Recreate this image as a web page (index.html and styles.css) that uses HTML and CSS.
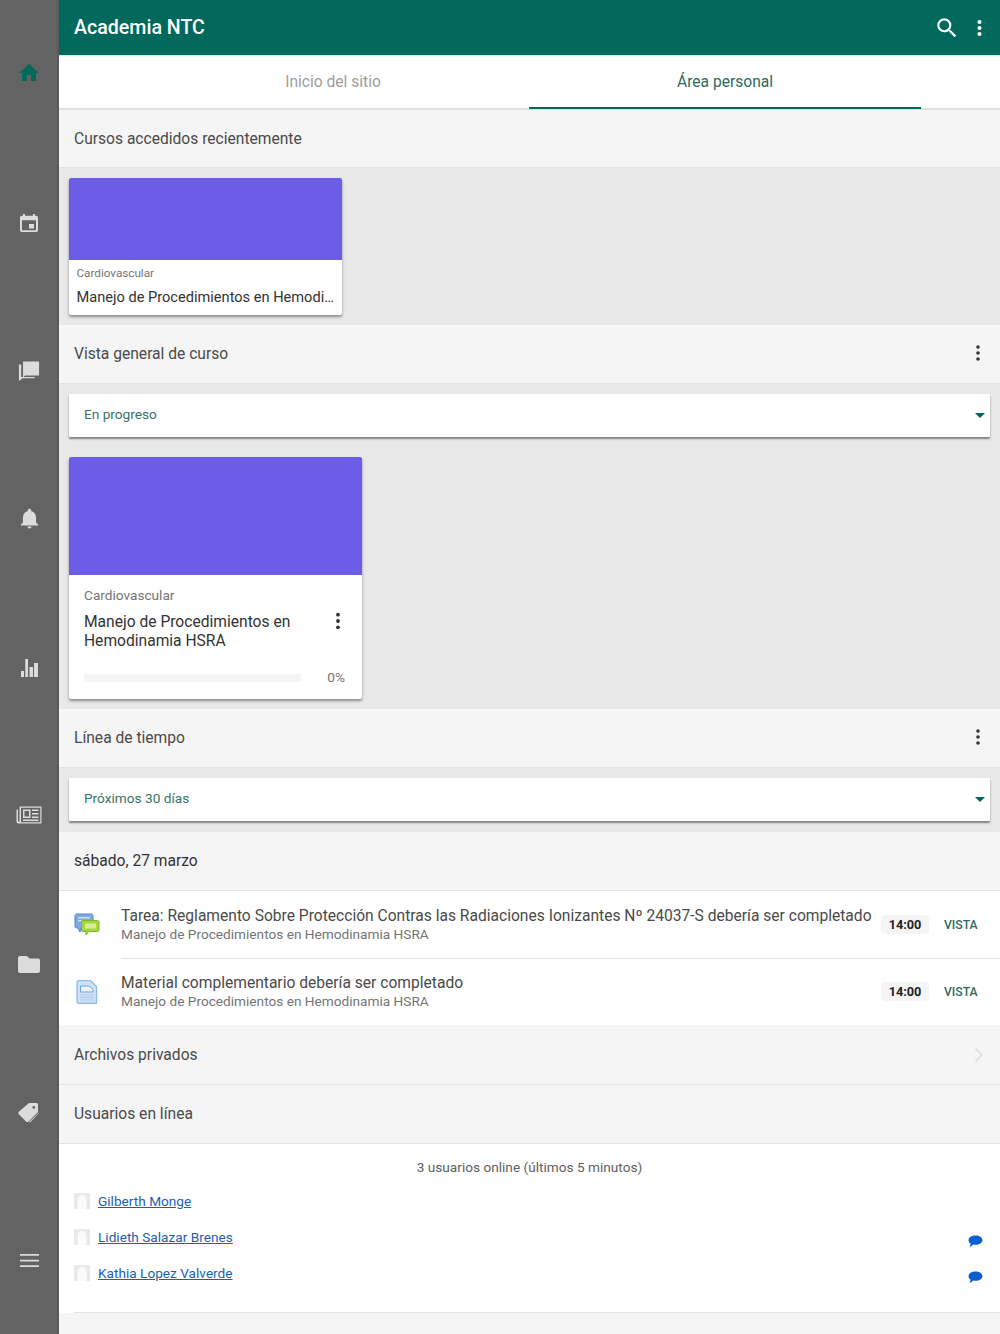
FILE: index.html
```html
<!DOCTYPE html>
<html lang="es">
<head>
<meta charset="utf-8">
<title>Academia NTC</title>
<link rel="stylesheet" href="styles.css">
</head>
<body>
<div class="app">
  <nav class="rail">
    <div class="rail-item"><svg class="rail-icon home" viewBox="0 0 24 24"><path d="M10 20v-6h4v6h5v-8h3L12 3 2 12h3v8z"/></svg></div>
    <div class="rail-item"><svg class="rail-icon cal" viewBox="3 1 18 20" preserveAspectRatio="none"><path d="M17 12h-5v5h5v-5zM16 1v2H8V1H6v2H5c-1.100 0-2 .9-2 2v14c0 1.100.9 2 2 2h14c1.100 0 2-.9 2-2V5c0-1.100-.9-2-2-2h-1V1h-2zm3 18H5V8h14v11z"/></svg></div>
    <div class="rail-item"><svg class="rail-icon chat" viewBox="0 0 24 24"><path d="M5.500 1.500h17.500v15.500H7.800L5.500 19z"/><path d="M3.500 5v13.500h14.500v1.500H5l-4 3V5z"/></svg></div>
    <div class="rail-item"><svg class="rail-icon bell" viewBox="0 0 24 24"><path d="M12 23.500c1.300 0 2.300-1 2.300-2.300H9.700c0 1.300 1 2.300 2.300 2.300zm7.500-7V11c0-3.700-2-6.800-5.500-7.700V2.800C14 1.700 13.100.8 12 .8s-2 .9-2 2v.5C6.500 4.200 4.500 7.300 4.500 11v5.500L2 19v1h20v-1z"/></svg></div>
    <div class="rail-item"><svg class="rail-icon chart" viewBox="0 0 17 18"><path d="M0 12h3v6H0zM4.300 0H7v18H4.300zM8.500 8H12v10H8.500zM13 4h4v14h-4z"/></svg></div>
    <div class="rail-item"><svg class="rail-icon wide" viewBox="0 0 26 18"><path d="M4 .5h21.500v17H2.500A2 2 0 0 1 .5 15.500V3.500H2v12h1.500V1zM5 1.700V16.300h19.300V1.700z" fill-rule="evenodd"/><path d="M7 3.500h7.500v8.500H7zM8.500 5v5.500H13V5zM16 3.500h6.500V5H16zM16 7h6.500v1.500H16zM16 10.500h6.500V12H16zM7 13.500h15.500V15H7z" fill-rule="evenodd"/></svg></div>
    <div class="rail-item"><svg class="rail-icon folder" viewBox="0 0 22 17"><path d="M9 0H2C.9 0 0 .9 0 2v13c0 1.100.9 2 2 2h18c1.100 0 2-.9 2-2V4.500c0-1.100-.9-2-2-2h-8.500z"/></svg></div>
    <div class="rail-item"><svg class="rail-icon tag" viewBox="0 0 22 20"><path d="M11 0h7.500c.8 0 1.500.7 1.500 1.500V9L10.500 18.500c-.7.7-1.800.7-2.500 0L.8 11.300c-.7-.7-.7-1.800 0-2.500zM15.800 5.800a1.400 1.400 0 1 0 0-2.800 1.400 1.400 0 0 0 0 2.800z" fill-rule="evenodd"/><path d="M21 4v6L12 19.500l-1-.5 10-9.500z"/></svg></div>
    <div class="rail-item"><svg class="rail-icon menu" viewBox="0 0 19 13"><path d="M0 0h19v1.700H0zM0 5.700h19v1.700H0zM0 11.300h19V13H0z"/></svg></div>
  </nav>

  <div class="main">
    <header class="topbar">
      <div class="brand">Academia NTC</div>
      <svg class="top-search" viewBox="0 0 24 24"><path d="M15.500 14h-.79l-.28-.27A6.471 6.471 0 0 0 16 9.500 6.500 6.500 0 1 0 9.500 16c1.610 0 3.090-.59 4.230-1.570l.27.28v.79l5 4.990L20.490 19l-4.990-5zm-6 0C7.010 14 5 11.990 5 9.500S7.010 5 9.500 5 14 7.010 14 9.500 11.990 14 9.500 14z"/></svg>
      <svg class="top-more" viewBox="0 0 6 20"><circle cx="3" cy="4" r="2"/><circle cx="3" cy="10" r="2"/><circle cx="3" cy="16" r="2"/></svg>
    </header>

    <div class="tabs">
      <div class="tab">Inicio del sitio</div>
      <div class="tab tab-active">Área personal</div>
    </div>

    <section class="head first">Cursos accedidos recientemente</section>
    <div class="grey recent">
      <article class="card card-small">
        <div class="cover cover-small"></div>
        <div class="small-body">
          <div class="cat-small">Cardiovascular</div>
          <div class="title-small">Manejo de Procedimientos en Hemodinamia HSRA</div>
        </div>
      </article>
    </div>

    <section class="head head-menu">Vista general de curso
      <svg class="dots" viewBox="0 0 6 20"><circle cx="3" cy="4" r="1.800"/><circle cx="3" cy="10" r="1.800"/><circle cx="3" cy="16" r="1.800"/></svg>
    </section>
    <div class="grey overview">
      <div class="select">En progreso<span class="caret"></span></div>
      <article class="card card-large">
        <div class="cover cover-large"></div>
        <div class="large-body">
          <div class="cat-large">Cardiovascular</div>
          <div class="title-row">
            <div class="title-large">Manejo de Procedimientos en Hemodinamia HSRA</div>
            <svg class="dots dark" viewBox="0 0 6 20"><circle cx="3" cy="3" r="2.100"/><circle cx="3" cy="10" r="2.100"/><circle cx="3" cy="17" r="2.100"/></svg>
          </div>
          <div class="progress-row"><div class="progress"></div><div class="pct">0%</div></div>
        </div>
      </article>
    </div>

    <section class="head head-menu">Línea de tiempo
      <svg class="dots" viewBox="0 0 6 20"><circle cx="3" cy="4" r="1.800"/><circle cx="3" cy="10" r="1.800"/><circle cx="3" cy="16" r="1.800"/></svg>
    </section>
    <div class="grey timeline-filter">
      <div class="select">Próximos 30 días<span class="caret"></span></div>
    </div>

    <section class="head date">sábado, 27 marzo</section>
    <div class="events">
      <div class="event">
        <svg class="event-icon" viewBox="0 0 26 24">
          <path d="M2.500 1h15a1.500 1.500 0 0 1 1.500 1.500v11a1.500 1.500 0 0 1-1.500 1.500H7l-1 4-2-4H2.500A1.500 1.500 0 0 1 1 13.500v-11A1.500 1.500 0 0 1 2.500 1z" fill="#7fa9e0" stroke="#4f86d6"/>
          <path d="M4 4h12v1.500H4zM4 7h8v1.500H4z" fill="#cfe0f5"/>
          <path d="M9 7.500h14.500a1.500 1.500 0 0 1 1.500 1.500v8a1.500 1.500 0 0 1-1.500 1.500H15l-3 3.500v-3.500H9A1.500 1.500 0 0 1 7.500 17V9A1.500 1.500 0 0 1 9 7.500z" fill="#a6d53e" stroke="#7fb52a"/>
          <path d="M11 10.500h11v5H11z" fill="#d8ec9a"/>
        </svg>
        <div class="event-text">
          <div class="event-title">Tarea: Reglamento Sobre Protección Contras las Radiaciones Ionizantes Nº 24037-S debería ser completado</div>
          <div class="event-course">Manejo de Procedimientos en Hemodinamia HSRA</div>
        </div>
        <span class="time">14:00</span><span class="view">VISTA</span>
      </div>
      <div class="event">
        <svg class="event-icon" viewBox="0 0 26 24">
          <path d="M4.500 .7h12L22.500 6.500V23.300H4.500A1.500 1.500 0 0 1 3 21.800V2.200A1.500 1.500 0 0 1 4.500 .7z" fill="#cfe3f8" stroke="#8fbbe8" stroke-width="1.300"/>
          <path d="M6.500 6h8.500l4 3.500V12H6.500z" fill="#eaf3fc" stroke="#6ea4dc"/>
          <path d="M6 14.500h14v1.100H6zM6 17h14v1.100H6zM6 19.500h14v1.100H6z" fill="#a9cdf0"/>
        </svg>
        <div class="event-text">
          <div class="event-title">Material complementario debería ser completado</div>
          <div class="event-course">Manejo de Procedimientos en Hemodinamia HSRA</div>
        </div>
        <span class="time">14:00</span><span class="view">VISTA</span>
      </div>
    </div>

    <section class="head head-menu files">Archivos privados
      <svg class="chevron" viewBox="0 0 10 16"><path d="M1.500 1.500 8 8l-6.500 6.500" fill="none" stroke="#dcdcdc" stroke-width="1.500"/></svg>
    </section>
    <section class="head">Usuarios en línea</section>

    <div class="online">
      <div class="online-count">3 usuarios online (últimos 5 minutos)</div>
      <div class="user"><svg class="avatar" viewBox="0 0 16 16"><rect width="16" height="16" fill="#e9e9e9"/><path d="M3.500 16V10C3 5 5 2 8 2s5 3 4.500 8v6z" fill="#fbfbfb"/></svg><a class="user-name" href="#">Gilberth Monge</a></div>
      <div class="user"><svg class="avatar" viewBox="0 0 16 16"><rect width="16" height="16" fill="#e9e9e9"/><path d="M3.500 16V10C3 5 5 2 8 2s5 3 4.500 8v6z" fill="#fbfbfb"/></svg><a class="user-name" href="#">Lidieth Salazar Brenes</a><svg class="msg" viewBox="0 0 14 12"><path d="M7 .5c3.600 0 6.500 1.900 6.500 4.300S10.600 9.100 7 9.100c-.7 0-1.300-.1-1.900-.2L1.500 11.300l1-3.200C1.200 7.300.500 6.100.500 4.800.5 2.400 3.400.5 7 .5z"/></svg></div>
      <div class="user"><svg class="avatar" viewBox="0 0 16 16"><rect width="16" height="16" fill="#e9e9e9"/><path d="M3.500 16V10C3 5 5 2 8 2s5 3 4.500 8v6z" fill="#fbfbfb"/></svg><a class="user-name" href="#">Kathia Lopez Valverde</a><svg class="msg" viewBox="0 0 14 12"><path d="M7 .5c3.600 0 6.500 1.900 6.500 4.300S10.600 9.100 7 9.100c-.7 0-1.300-.1-1.900-.2L1.500 11.300l1-3.200C1.200 7.300.500 6.100.500 4.800.5 2.400 3.400.5 7 .5z"/></svg></div>
    </div>
    <div class="foot"></div>
  </div>
</div>
</body>
</html>
```

FILE: styles.css
```css
* { box-sizing: border-box; }
html, body { margin: 0; padding: 0; height: 1334px; overflow: hidden; }
body { font-family: Roboto, "Liberation Sans", sans-serif; color: #424242; background: #f5f5f5; }

.app { display: flex; height: 1334px; }

.rail { width: 59px; flex: none; background: #636363; border-right: 2px solid #5a5a5a; display: flex; flex-direction: column; }
.rail-item { flex: 1; display: flex; align-items: center; justify-content: center; padding-left: 1px; }
.rail-icon { width: 24px; height: 24px; fill: #dcdcdc; }
.rail-icon.home { fill: #00695c; margin-bottom: 2px; }
.rail-icon.cal { width: 18px; height: 18px; margin-top: 2px; }
.rail-icon.chat { width: 22px; height: 22px; }
.rail-icon.bell { width: 21px; height: 21px; }
.rail-icon.wide { width: 26px; height: 18px; }
.rail-icon.chart { width: 17px; height: 18px; margin-top: 2px; }
.rail-icon.folder { width: 22px; height: 17px; margin-top: 2px; }
.rail-icon.tag { width: 22px; height: 20px; margin-top: 2px; }
.rail-icon.menu { width: 19px; height: 13px; margin-top: 2px; }

.main { flex: 1; min-width: 0; display: flex; flex-direction: column; }

.topbar { height: 55px; flex: none; background: #00695c; color: #fff; display: flex; align-items: center; padding: 0 17px 0 15px; }
.brand { flex: 1; font-size: 19.600px; font-weight: 500; padding-bottom: 1px; }
.top-search { width: 26px; height: 26px; fill: #fff; margin-right: 16px; }
.top-more { width: 7px; height: 20px; fill: #fff; }

.tabs { height: 55px; flex: none; background: #fff; display: flex; padding: 0 79px 0 78px; border-bottom: 2px solid #dfdfdf; box-shadow: inset 0 3px 2px -2px #d8d8d8; }
.tab { flex: 1; display: flex; align-items: center; justify-content: center; font-size: 15.600px; color: #9e9e9e; }
.tab-active { color: #2f6b5f; border-bottom: 2px solid #00695c; margin-bottom: -1px; padding-top: 1px; }

.head { height: 59px; flex: none; background: #f5f5f5; border-bottom: 1px solid #e2e2e2; display: flex; align-items: center; padding: 0 15px; font-size: 15.600px; color: #4a4a4a; }
.head.first { height: 58px; }
.head.files { height: 60px; }
.head-menu { justify-content: space-between; }
.date { color: #333; }
.dots { width: 6px; height: 20px; fill: #333; margin: 0 4px 2px 0; }
.dots.dark { margin: -1px 4px 0 0; flex: none; width: 6px; height: 18px; }
.chevron { width: 10px; height: 16px; margin-right: 1px; }

.grey { background: #e8e8e8; padding: 10px; flex: none; }
.recent { height: 157px; }
.overview { height: 325px; }
.timeline-filter { height: 64px; }

.card { background: #fff; border-radius: 2px; box-shadow: 0 2px 3px rgba(0,0,0,.4); overflow: hidden; }
.cover { background: #6c5ce7; }
.card-small { width: 273px; height: 137px; }
.cover-small { height: 82px; }
.small-body { padding: 6px 7px 0 7.500px; }
.cat-small { font-size: 11.700px; line-height: 14px; color: #757575; }
.title-small { margin-top: 7px; font-size: 14.600px; line-height: 20px; color: #333; white-space: nowrap; overflow: hidden; text-overflow: ellipsis; }

.select { height: 43px; background: #fff; box-shadow: 0 2px 2px rgba(0,0,0,.45); border-radius: 1px; display: flex; align-items: center; justify-content: space-between; padding: 0 5px 3px 15px; font-size: 13.650px; color: #3a7469; }
.caret { width: 0; height: 0; margin-top: 3px; border-left: 5px solid transparent; border-right: 5px solid transparent; border-top: 5px solid #00695c; }

.card-large { width: 293px; height: 242px; margin-top: 20px; }
.cover-large { height: 118px; }
.large-body { padding: 12px 17px 0 15px; }
.cat-large { font-size: 13.650px; line-height: 16px; color: #757575; }
.title-row { display: flex; justify-content: space-between; margin-top: 10px; }
.title-large { width: 240px; font-size: 15.600px; line-height: 19px; color: #333; }
.progress-row { display: flex; align-items: center; justify-content: space-between; margin-top: 18px; }
.progress { width: 217px; height: 8px; background: #f5f5f5; }
.pct { font-size: 13.650px; color: #757575; padding-bottom: 2px; }

.events { background: #fff; flex: none; height: 134px; }
.event { height: 67px; display: flex; align-items: center; padding: 0 22px 0 15px; position: relative; }
.event + .event::before { content: ""; position: absolute; top: 0; left: 62px; right: 0; height: 1px; background: #e2e2e2; }
.event-icon { width: 26px; height: 24px; flex: none; margin-right: 21px; }
.event-text { flex: 1; min-width: 0; padding: 1px 0 2px; }
.event-title { font-size: 15.600px; line-height: 19px; color: #4a4a4a; white-space: nowrap; }
.event-course { font-size: 13.650px; line-height: 16px; color: #757575; }
.time { background: #f5f5f5; border-radius: 4px; font-size: 12.700px; font-weight: 700; color: #212121; padding: 2px 0; width: 48px; line-height: 15px; text-align: center; margin-right: 15px; white-space: nowrap; }
.view { font-size: 12.200px; font-weight: 500; color: #2f6b5f; width: 34px; }

.online { background: #fff; height: 169px; flex: none; padding: 14px 0 0; position: relative; }
.online::after { content: ""; position: absolute; left: 15px; right: 0; bottom: 0; height: 1px; background: #e2e2e2; }
.online-count { font-size: 13.650px; line-height: 18px; text-align: center; color: #616161; margin-bottom: 7px; }
.user { height: 36px; display: flex; align-items: center; padding: 0 17px 0 15px; }
.avatar { width: 16px; height: 16px; margin-right: 8px; flex: none; }
.user-name { flex: 1; font-size: 13.650px; color: #1e5fb0; }
.msg { width: 15px; height: 13px; fill: #0a5fd0; flex: none; margin-top: 8px; }
.foot { flex: 1; background: #f5f5f5; }
```
